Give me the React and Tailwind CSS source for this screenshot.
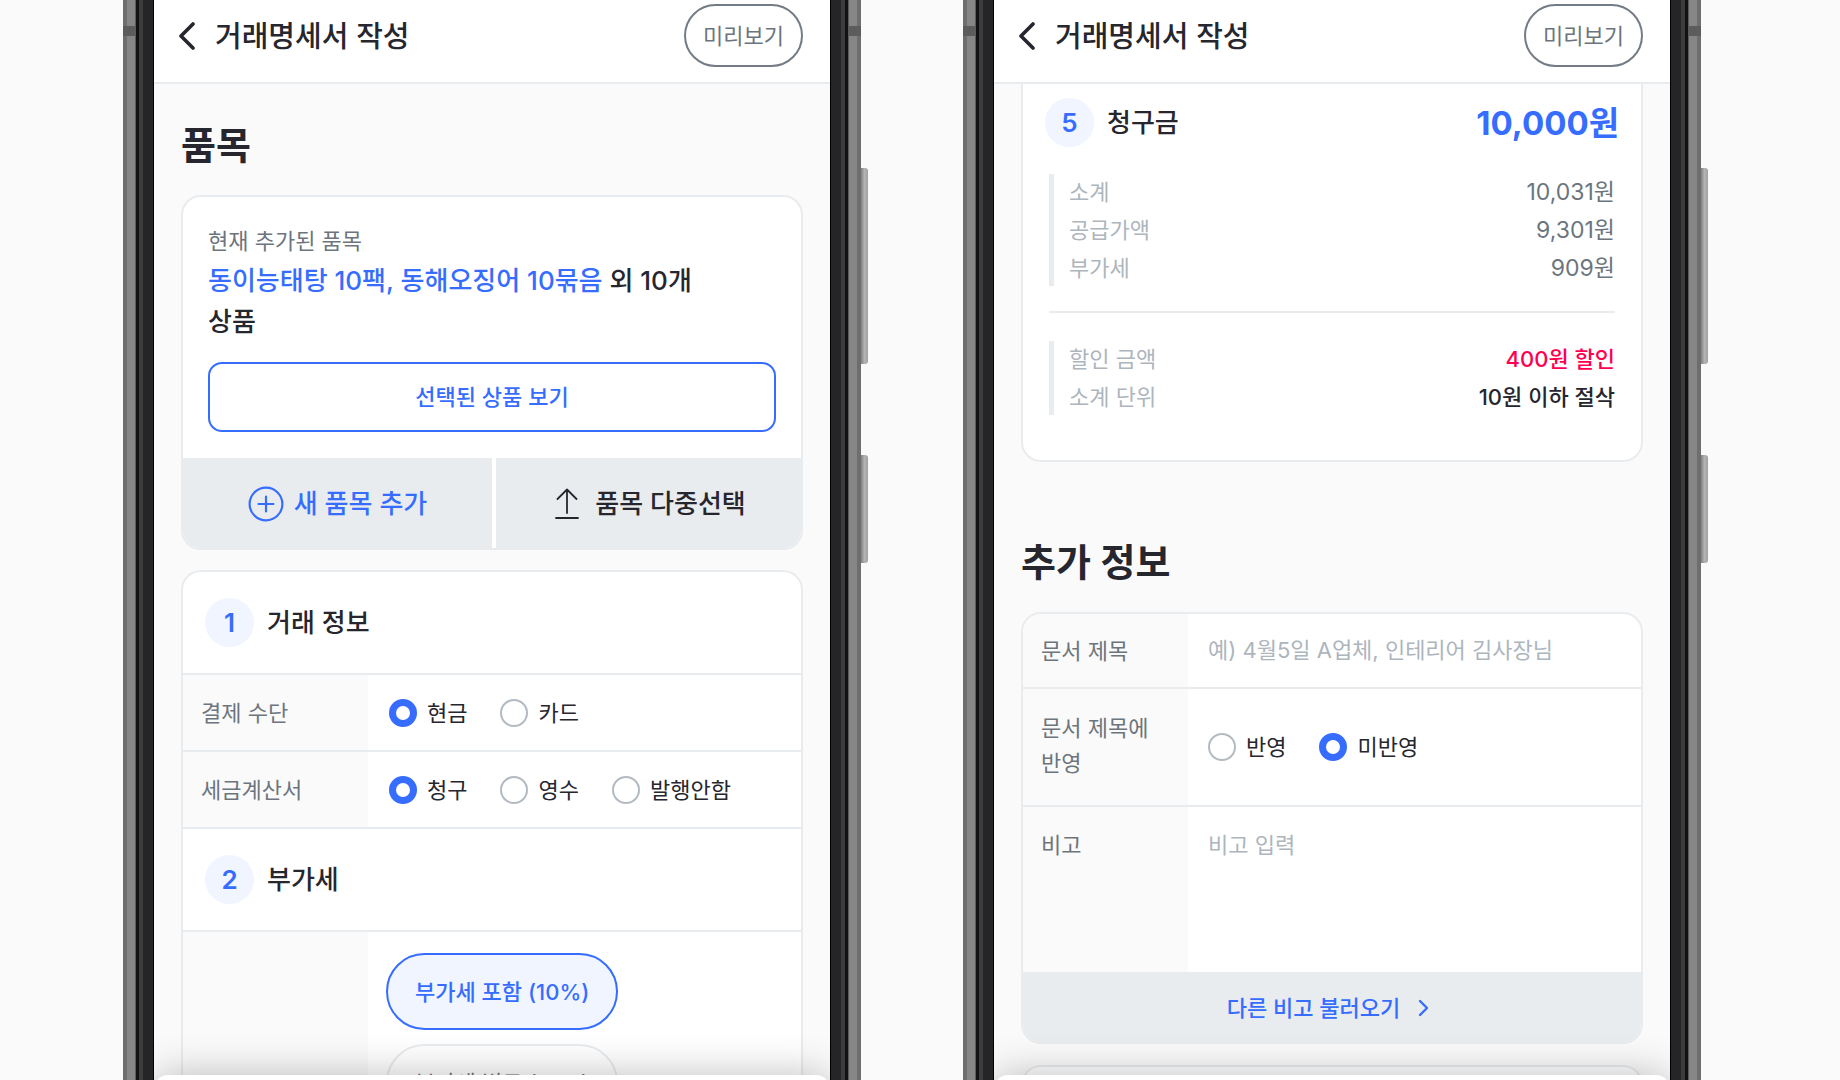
import { useState } from 'react';

function SideRail({ mirrored }) {
  return (
    <div className={`relative flex w-[31px] shrink-0 ${mirrored ? 'flex-row-reverse' : ''}`} aria-hidden="true">
      <div className="w-1 bg-[#6e6e6e]" />
      <div className="w-2 bg-[#868686]" />
      <div className="w-px bg-[#5a5a5a]" />
      <div className="w-[3px] bg-[#121212]" />
      <div className="w-1 bg-[#3c3c3c]" />
      <div className="flex-1 bg-[#252527]" />
      <div className="w-px bg-black" />
      {/* Antenna band */}
      <div className={`absolute top-[26px] h-[10px] w-[13px] bg-[#5c5c5c] ${mirrored ? 'right-0' : 'left-0'}`} />
      {mirrored && (
        <>
          <div className="absolute left-full top-[168px] h-[196px] w-[7px] rounded-r-[3px] bg-linear-to-r from-[#808080] via-[#b4b4b4] to-[#a0a0a0]" />
          <div className="absolute left-full top-[455px] h-[108px] w-[7px] rounded-r-[3px] bg-linear-to-r from-[#808080] via-[#b4b4b4] to-[#a0a0a0]" />
        </>
      )}
    </div>
  );
}

function Phone({ children }) {
  return (
    <section className="flex h-full min-w-0 max-w-[738px] flex-1">
      <SideRail />
      <div className="relative flex min-w-0 flex-1 flex-col overflow-hidden bg-[#fafafa]">
        <header className="flex shrink-0 items-center border-b-2 border-[#e9ecef] bg-white pb-[15px] pl-[25px] pr-[27px] pt-1">
          <button type="button" aria-label="뒤로 가기" className="mr-5">
            <svg width="16" height="28" viewBox="0 0 16 28" fill="none" stroke="#26262e" strokeWidth="3.6" strokeLinecap="round" strokeLinejoin="round">
              <path d="M14 2 2 14l12 12" />
            </svg>
          </button>
          <h1 className="pt-0.5 text-[29px] font-medium leading-10">거래명세서 작성</h1>
          <button type="button" className="ml-auto h-[63px] rounded-full border-2 border-[#737c85] px-[17px] text-[22px] leading-8 text-[#6c757d]">
            미리보기
          </button>
        </header>
        <div className="min-h-0 flex-1 overflow-hidden px-[27px]">{children}</div>
        {/* Bottom sheet peeking in */}
        <div className="absolute inset-x-0 top-full -mt-[5px] h-24 rounded-t-[14px] bg-white shadow-[0_0_40px_rgba(0,0,0,0.26)]" />
      </div>
      <SideRail mirrored />
    </section>
  );
}

function StepTitle({ number, title }) {
  return (
    <div className="flex items-center gap-[13px]">
      <span className="flex size-[49px] items-center justify-center rounded-full bg-[#f0f5ff] text-[26px] font-semibold leading-8 text-[#366dff]">
        {number}
      </span>
      <h3 className="text-[26px] font-medium leading-8">{title}</h3>
    </div>
  );
}

function Radios({ name, options, initial }) {
  const [value, setValue] = useState(initial);

  return (
    <div className="flex items-center gap-[33px]" role="radiogroup" aria-label={name}>
      {options.map((option) => (
        <label key={option} className="flex items-center gap-[10px] text-[22px] leading-8">
          <input
            type="radio"
            name={name}
            checked={value === option}
            onChange={() => setValue(option)}
            className="size-7 appearance-none rounded-full border-2 border-[#b3bac1] bg-white checked:border-[7px] checked:border-[#366dff]"
          />
          {option}
        </label>
      ))}
    </div>
  );
}

function RadioRow({ label, options, initial }) {
  return (
    <div className="flex h-[77px] items-stretch border-b-2 border-[#e9ecef]">
      <div className="flex w-[185px] items-center bg-[#fafafa] pl-[18px] text-[22px] leading-8 text-[#6c757d]">{label}</div>
      <div className="flex items-center pl-[21px]">
        <Radios name={label} options={options} initial={initial} />
      </div>
    </div>
  );
}

function ItemsScreen() {
  const [vat, setVat] = useState('포함');

  return (
    <>
      <h2 className="pb-[25px] pt-[37px] text-[38px] font-semibold leading-[49px]">품목</h2>

      <div className="overflow-hidden rounded-[20px] border-2 border-[#e9ecef] bg-white">
        <div className="px-[25px] pb-[26px] pt-7">
          <p className="text-[22px] leading-8 text-[#6c757d]">현재 추가된 품목</p>
          <p className="mt-[3px] max-w-[500px] break-keep text-[26px] font-medium leading-[41px]">
            <span className="text-[#366dff]">동이능태탕 10팩, 동해오징어 10묶음</span> 외 10개 상품
          </p>
          <button type="button" className="mt-5 h-[70px] w-full rounded-[14px] border-2 border-[#366dff] text-[22px] font-medium leading-8 text-[#366dff]">
            선택된 상품 보기
          </button>
        </div>
        <div className="grid grid-cols-[313fr_305fr] bg-[#e9ecef] text-[26px] font-medium leading-8">
          <button type="button" className="flex h-[90px] items-center justify-center gap-[10px] border-r-4 border-white pt-0.5 text-[#366dff]">
            <svg width="36" height="36" viewBox="0 0 36 36" fill="none" stroke="currentColor" strokeWidth="2.2" strokeLinecap="round">
              <circle cx="18" cy="18" r="16.4" />
              <path d="M18 10.5v15M10.5 18h15" />
            </svg>
            새 품목 추가
          </button>
          <button type="button" className="flex h-[90px] items-center justify-center gap-4 pl-1 pt-0.5">
            <svg width="24" height="32" viewBox="0 0 24 32" fill="none" stroke="currentColor" strokeWidth="1.8" strokeLinecap="round" strokeLinejoin="round">
              <path d="M12 25V1.500M2.500 11 12 1.500 21.500 11M1 30h22" />
            </svg>
            품목 다중선택
          </button>
        </div>
      </div>

      <div className="mt-5 rounded-t-[20px] border-2 border-b-0 border-[#e9ecef] bg-white">
        <div className="border-b-2 border-[#e9ecef] px-[22px] py-[26px]">
          <StepTitle number={1} title="거래 정보" />
        </div>
        <RadioRow label="결제 수단" options={['현금', '카드']} initial="현금" />
        <RadioRow label="세금계산서" options={['청구', '영수', '발행안함']} initial="청구" />
        <div className="border-b-2 border-[#e9ecef] px-[22px] py-[26px]">
          <StepTitle number={2} title="부가세" />
        </div>
        <div className="flex">
          <div className="w-[185px] bg-[#fafafa]" />
          <div className="flex flex-col items-start gap-[14px] py-[21px] pl-[18px]">
            {['포함', '별도'].map((kind) => (
              <button
                key={kind}
                type="button"
                aria-pressed={vat === kind}
                onClick={() => setVat(kind)}
                className={`h-[77px] rounded-full border-2 px-[27px] text-[22px] leading-8 ${
                  vat === kind ? 'border-[#366dff] bg-[#f0f5ff] font-medium text-[#366dff]' : 'border-[#e9ecef] bg-white text-[#6c757d]'
                }`}
              >
                부가세 {kind} (10%)
              </button>
            ))}
          </div>
        </div>
      </div>
    </>
  );
}

function AmountList({ rows }) {
  return (
    <dl className="flex flex-col gap-0.5 border-l-[5px] border-[#e9ecef] pl-[15px] text-[22px] leading-9">
      {rows.map((row) => (
        <div key={row.label} className="flex justify-between">
          <dt className="text-[#adb5bd]">{row.label}</dt>
          <dd className={row.tone}>{row.value}</dd>
        </div>
      ))}
    </dl>
  );
}

const totals = [
  { label: '소계', value: '10,031원', tone: 'text-[23px] text-[#6c757d]' },
  { label: '공급가액', value: '9,301원', tone: 'text-[23px] text-[#6c757d]' },
  { label: '부가세', value: '909원', tone: 'text-[23px] text-[#6c757d]' },
];

const discounts = [
  { label: '할인 금액', value: '400원 할인', tone: 'font-medium text-[#ff0050]' },
  { label: '소계 단위', value: '10원 이하 절삭', tone: 'font-medium' },
];

function SummaryScreen() {
  return (
    <>
      <div className="rounded-b-[20px] border-2 border-t-0 border-[#e9ecef] bg-white px-[22px] pb-[45px] pt-[14px]">
        <div className="flex items-center justify-between">
          <StepTitle number={5} title="청구금" />
          <strong className="text-[33px] font-bold leading-10 text-[#366dff]">10,000원</strong>
        </div>
        <div className="px-1 pt-[27px]">
          <AmountList rows={totals} />
          <hr className="mb-7 mt-[25px] border-t-2 border-[#e9ecef]" />
          <AmountList rows={discounts} />
        </div>
      </div>

      <h2 className="pb-[25px] pt-[76px] text-[38px] font-semibold leading-[49px]">추가 정보</h2>

      <div className="overflow-hidden rounded-[20px] border-2 border-[#e9ecef] bg-white text-[22px]">
        <div className="flex h-[75px] border-b-2 border-[#e9ecef]">
          <label htmlFor="doc-title" className="flex w-[165px] items-center bg-[#fafafa] pl-[18px] leading-8 text-[#6c757d]">
            문서 제목
          </label>
          <input
            id="doc-title"
            type="text"
            placeholder="예) 4월5일 A업체, 인테리어 김사장님"
            className="min-w-0 flex-1 px-5 outline-none placeholder:text-[#adb5bd]"
          />
        </div>
        <div className="flex h-[118px] border-b-2 border-[#e9ecef]">
          <div className="w-[165px] break-keep bg-[#fafafa] pl-[18px] pr-6 pt-[22px] leading-[35px] text-[#6c757d]">문서 제목에 반영</div>
          <div className="flex items-center pl-5">
            <Radios name="문서 제목에 반영" options={['반영', '미반영']} initial="미반영" />
          </div>
        </div>
        <div className="flex h-[165px]">
          <label htmlFor="note" className="w-[165px] bg-[#fafafa] pl-[18px] pt-[22px] leading-8 text-[#6c757d]">
            비고
          </label>
          <textarea
            id="note"
            placeholder="비고 입력"
            className="min-w-0 flex-1 resize-none px-5 pt-[22px] leading-8 outline-none placeholder:text-[#adb5bd]"
          />
        </div>
        <button type="button" className="flex h-[70px] w-full items-center justify-center gap-[18px] bg-[#e9ecef] pr-2 pt-0.5 font-medium leading-8 text-[#366dff]">
          다른 비고 불러오기
          <svg width="11" height="18" viewBox="0 0 11 18" fill="none" stroke="currentColor" strokeWidth="2.4" strokeLinecap="round" strokeLinejoin="round">
            <path d="M2 2l7 7-7 7" />
          </svg>
        </button>
      </div>

      <div className="mt-[21px] h-20 rounded-t-[20px] border-2 border-[#e9ecef] bg-white" />
    </>
  );
}

export default function App() {
  return (
    <main className="flex h-screen justify-center gap-[102px] overflow-hidden bg-[#fafafa] pr-4 font-['Inter','Noto_Sans_CJK_KR',sans-serif] text-[#26262e]">
      <Phone>
        <ItemsScreen />
      </Phone>
      <Phone>
        <SummaryScreen />
      </Phone>
    </main>
  );
}
